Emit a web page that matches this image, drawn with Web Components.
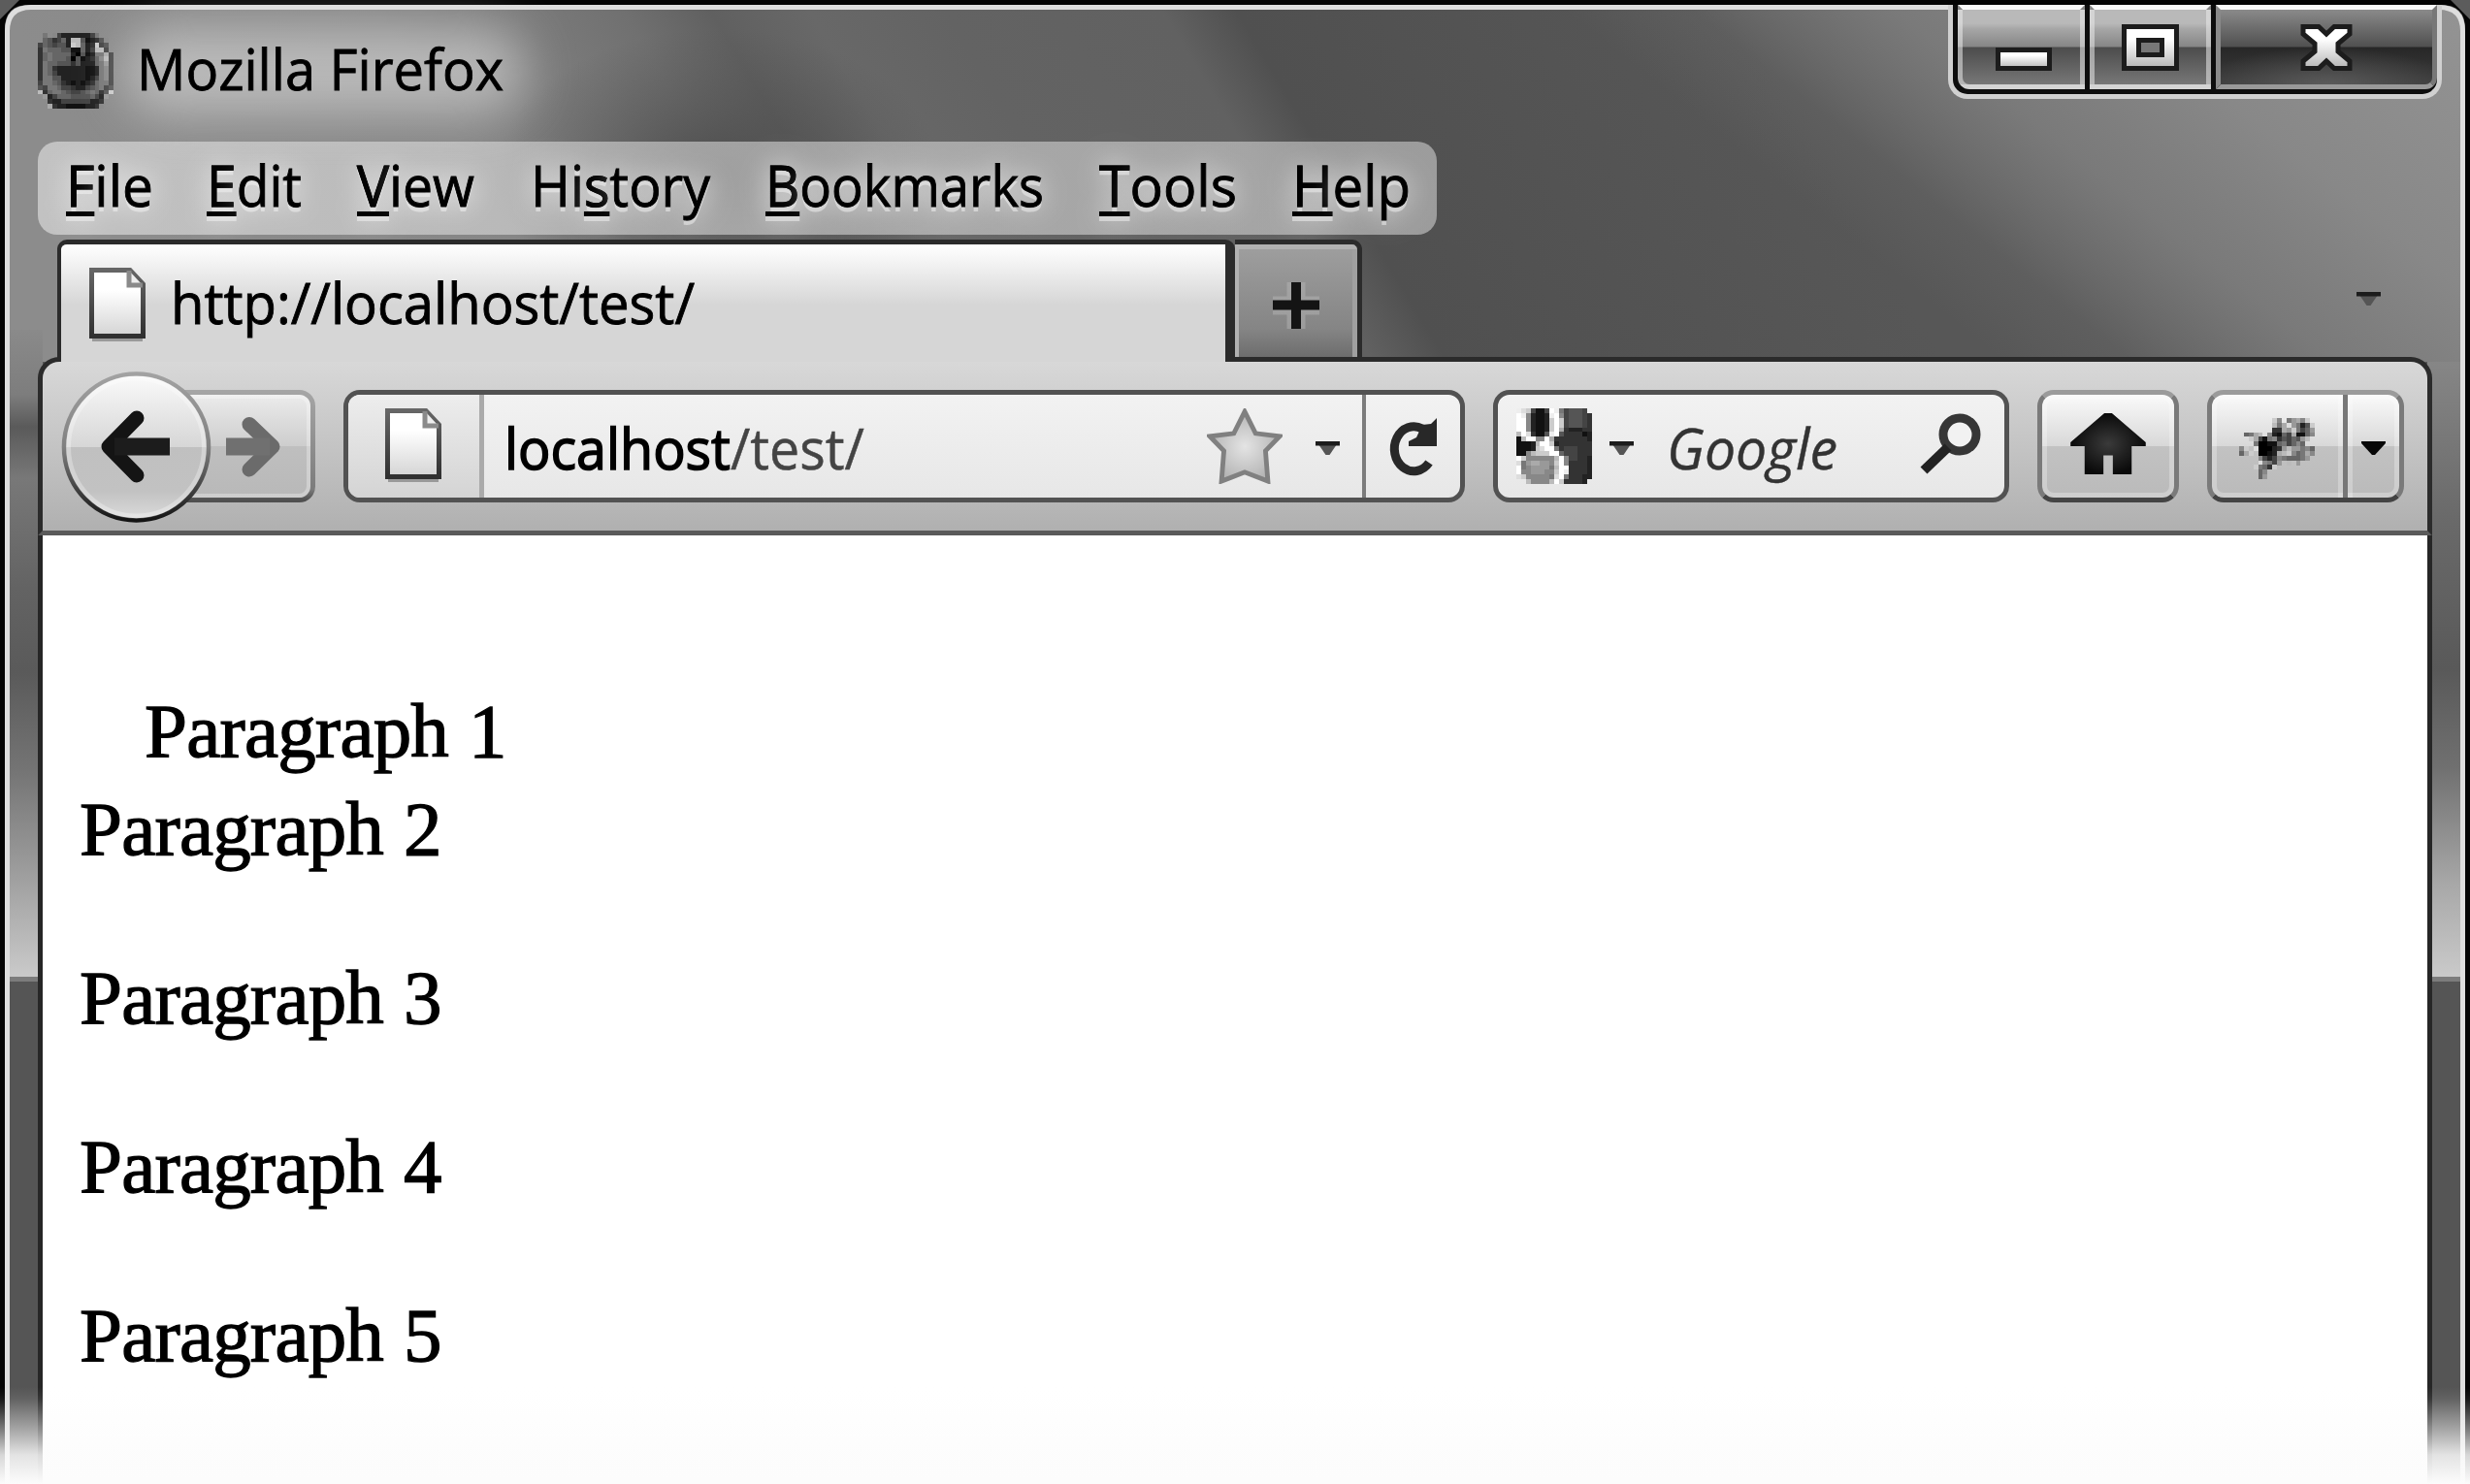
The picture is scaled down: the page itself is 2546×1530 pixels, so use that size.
<!DOCTYPE html>
<html lang="en">
<head>
<meta charset="utf-8">
<title>Mozilla Firefox</title>
<style>
html,body{margin:0;width:2546px;height:1530px;overflow:hidden;background:#777}
</style>
</head>
<body>
<browser-window>
  <title-bar slot="title">Mozilla Firefox</title-bar>
  <menu-bar slot="menu"></menu-bar>
  <tab-strip slot="tabs">http://localhost/test/</tab-strip>
  <nav-toolbar slot="toolbar"></nav-toolbar>
  <page-view slot="page">
    <p class="first">Paragraph 1</p>
    <p>Paragraph 2</p>
    <p>Paragraph 3</p>
    <p>Paragraph 4</p>
    <p>Paragraph 5</p>
  </page-view>
</browser-window>
<script>
const define = (name, html, setup) => customElements.define(name, class extends HTMLElement {
  constructor() { super(); this.attachShadow({ mode: 'open' }).innerHTML = html; }
  connectedCallback() { if (setup) setup.call(this, this.shadowRoot); }
});

/* Text condensed or widened to a set advance width */
define('fit-text', `<style>
:host{display:inline-block;white-space:nowrap;flex:none;font-family:"Open Sans","Noto Sans",sans-serif;color:#000;-webkit-text-stroke:.9px}
span{display:inline-block;transform-origin:0 50%;white-space:pre}
</style><span><slot></slot></span>`, function (root) {
  const w = +this.getAttribute('width');
  this.style.fontSize = (this.getAttribute('size') || 59) + 'px';
  this.style.width = 'auto';
  const s = root.querySelector('span');
  s.style.transform = 'none';
  const m = s.getBoundingClientRect().width;
  this.style.width = w + 'px';
  if (m) s.style.transform = 'scaleX(' + w / m + ')';
});

/* Grey-level bitmaps: one hex digit per cell, "." is empty */
const BITMAPS = {
  firefox: [
    ".7.8422222247...", ".653462bb512358.", "4654552cb623c45.", "376665511624bb4.",
    "36766662051277a4", "36766650512368b4", "3766555352226794", "3763222222112784",
    "3764222222112784", "3775522222124784", "4776532121236774", "5477644322456745",
    "b36776544567635c", ".92466655556429.", "..322444444223..", "..a32211112238.."],
  google: [
    "edc4114fe745554.", "fe82112ef8455543", "ff82112cfc455543", "ff82112cfc455543",
    "ff82112cfa322233", "bfd3115ef5333312", "1bff88fa33333332", "1112bffc23333333",
    "1112cdff73444333", "118bcccff6444333", "fc888888bf844332", "d79aa998cf833332",
    "f7899997bff33332", "f8899988cfe33332", "dc888887df733322", "..b8888bfc33332."],
  fly: [
    ".......c8.79a8c.", ".......b7ad9725c", ".......33a9c7469", ".67ab.82164a1168",
    "..ca4178354659b.", "...70011674686..", "8c.d000239b99786", "6ac.0012abc867a8",
    "....84248766679.", "....d8749.b.9...", "...c763c........", "....68..........",
    "....69.........."]
};
define('bitmap-icon', `<style>:host{display:block;flex:none}svg{display:block;width:100%;height:100%}</style>`, function (root) {
  const rows = BITMAPS[this.getAttribute('name')];
  let r = '';
  rows.forEach((row, y) => [...row].forEach((c, x) => {
    if (c !== '.') r += `<rect x="${x}" y="${y}" width="1.02" height="1.02" fill="#${c + c + c}"/>`;
  }));
  root.innerHTML += `<svg viewBox="0 0 16 ${rows.length}" preserveAspectRatio="none" shape-rendering="crispEdges">${r}</svg>`;
});

define('page-icon', `<style>:host{display:block;width:58px;height:76px;flex:none}svg{display:block}</style>
<svg width="58" height="76" viewBox="0 0 58 76">
<defs><linearGradient id="g" x1="0" y1="0" x2="0" y2="1"><stop offset=".3" stop-color="#fff"/><stop offset="1" stop-color="#d4d4d4"/></linearGradient>
<linearGradient id="s" x1="0" y1="0" x2="0" y2="1"><stop offset="0" stop-color="#666"/><stop offset="1" stop-color="#303030"/></linearGradient></defs>
<rect x="3" y="72" width="52" height="4" fill="#999"/>
<path d="M2.5 2.5H42L55.500 17V70.500H2.500Z" fill="url(#g)" stroke="url(#s)" stroke-width="5"/>
<path d="M41 3V18H55" fill="#eee" stroke="#8a8a8a" stroke-width="5"/></svg>`);

define('drop-arrow', `<style>:host{display:block;width:29px;height:18px;flex:none}svg{display:block}</style>
<svg width="29" height="18" viewBox="0 0 29 18"><path d="M3 0H26L16.500 14H12.500Z" fill="#555"/><path d="M2 0H27V4.500H2Z" fill="#1c1c1c"/></svg>`);

define('title-bar', `<style>
:host{display:flex;height:136px;position:relative;padding-left:29px;box-sizing:border-box}
bitmap-icon{width:78px;height:78px;margin-top:24px}
.t{position:relative;margin-left:24px;height:120px;line-height:120px}
.t::before{content:"";position:absolute;left:-14px;top:18px;width:415px;height:90px;border-radius:42px;background:rgba(225,225,225,.55);filter:blur(25px)}
fit-text{position:relative}
</style><bitmap-icon name="firefox"></bitmap-icon>
<div class="t"><fit-text width="378"><slot></slot></fit-text></div>
<window-buttons></window-buttons>`);

define('window-buttons', `<style>
:host{display:block;position:absolute;left:1998px;top:-5px;width:509px;height:97px}
.o{display:flex;height:97px;box-sizing:border-box;border:5px solid #d0d0d0;border-top:0;border-radius:0 0 20px 20px;background:#0d0d0d;padding:0 5px 5px;gap:5px}
.b{height:87px;box-sizing:border-box;border:5px solid rgba(235,235,235,.55);border-top:5px solid #fafafa;display:flex;background:linear-gradient(#b9b9b9 0 14px,#a6a6a6 20px,#868686 38px,#4c4c4c 39px,#777 100%)}
.b svg{display:block}
.b:first-child{width:131px;border-bottom-left-radius:12px}.b:nth-child(2){width:125px}
.b:last-child{flex:1;border-bottom-right-radius:12px;border-left-color:#8a8a8a;border-right-color:#777;border-bottom-color:#999;background:radial-gradient(ellipse 60% 50% at 50% 100%,rgba(110,110,110,.6),transparent),linear-gradient(#8a8a8a,#505050 38px,#272727 39px,#3d3d3d 100%)}
</style><div class="o">
<div class="b"><svg width="121" height="77"><defs><linearGradient id="w" x1="0" y1="0" x2="0" y2="1"><stop offset=".3" stop-color="#fff"/><stop offset="1" stop-color="#b5b5b5"/></linearGradient></defs><rect x="36.500" y="41.500" width="53" height="19" fill="url(#w)" stroke="#1c1c1c" stroke-width="5"/></svg></div>
<div class="b"><svg width="115" height="77"><rect x="30.500" y="17.500" width="54" height="43" fill="url(#w)" stroke="#1c1c1c" stroke-width="5"/><defs><linearGradient id="w" x1="0" y1="0" x2="0" y2="1"><stop offset=".3" stop-color="#fff"/><stop offset="1" stop-color="#b5b5b5"/></linearGradient></defs><rect x="45.500" y="31.500" width="24" height="15" fill="#777" stroke="#1c1c1c" stroke-width="5"/></svg></div>
<div class="b"><svg width="218" height="77"><defs><linearGradient id="w" x1="0" y1="0" x2="0" y2="1"><stop offset=".3" stop-color="#fff"/><stop offset="1" stop-color="#b5b5b5"/></linearGradient></defs><path d="M85 17.500H101L109 25L117 17.500H133V25L121 35V43L133 53V60.500H117L109 53L101 60.500H85V53L97 43V35L85 25Z" fill="url(#w)" stroke="#1c1c1c" stroke-width="5"/></svg></div>
</div>`);

define('menu-bar', `<style>
:host{display:flex;width:1442px;height:96px;margin-left:29px;box-sizing:border-box;padding-left:29px;border-radius:20px;background:linear-gradient(90deg,rgba(230,230,230,.6),rgba(215,215,215,.6) 45%,rgba(225,225,225,.52) 100%);line-height:89px}
fit-text{text-shadow:0 5px 0 rgba(245,245,245,.5),0 0 24px rgba(255,255,255,.75),0 0 40px rgba(255,255,255,.5)}
u{text-decoration:underline;text-decoration-thickness:5px;text-underline-offset:5px;text-decoration-skip-ink:none}
.g1{margin-left:55px}.g2{margin-left:57px}.g3{margin-left:58px}
</style>
<fit-text width="90"><u>F</u>ile</fit-text><fit-text class="g1" width="98"><u>E</u>dit</fit-text><fit-text class="g2" width="121"><u>V</u>iew</fit-text><fit-text class="g3" width="185">Hi<u>s</u>tory</fit-text><fit-text class="g2" width="287"><u>B</u>ookmarks</fit-text><fit-text class="g2" width="142"><u>T</u>ools</fit-text><fit-text class="g2" width="122"><u>H</u>elp</fit-text>`);

define('tab-strip', `<style>
:host{display:flex;position:relative;z-index:2;margin-top:5px;height:126px;padding-left:49px}
.tab{display:flex;box-sizing:border-box;width:1214px;height:126px;border:solid #2b2b2b;border-width:5px 10px 0 4px;border-radius:10px 10px 0 0;background:linear-gradient(#fff,#f2f2f2 20px,#d6d6d6 62px);line-height:119px;padding-left:29px}
page-icon{margin-top:24px}
fit-text{margin-left:26px}
.new{box-sizing:border-box;width:131px;height:121px;border:solid #2b2b2b;border-width:5px 5px 0 0;border-radius:0 10px 0 0;background:linear-gradient(#9f9f9f,#858585 75%,#6d6d6d);box-shadow:inset 4px 5px 0 #b2b2b2,inset -5px 0 0 #a0a0a0}
.new svg{display:block}
drop-arrow{margin:54px 0 0 1023px}
</style>
<div class="tab"><page-icon></page-icon><fit-text width="540"><slot></slot></fit-text></div>
<div class="new"><svg width="126" height="116"><path d="M63 39V87M39 63H87" stroke="rgba(190,190,190,.4)" stroke-width="19" fill="none"/><path d="M63 39V87M39 62.500H87" stroke="#141414" stroke-width="10" fill="none"/></svg></div>
<drop-arrow></drop-arrow>`);

define('nav-toolbar', `<style>
:host{display:flex;gap:29px;position:relative;margin:-5px 29px 0;height:184px;box-sizing:border-box;border:5px solid #2b2b2b;border-bottom-color:#5a5a5a;border-radius:22px 22px 0 0;background:linear-gradient(#d8d8d8,#b0b0b0);padding:29px 24px 0 19px}
.nav{width:262px;height:116px;flex:none;overflow:visible}
.box,.btn{box-sizing:border-box;height:116px;border:5px solid #525252;border-radius:17px;background:linear-gradient(#f2f2f2,#e7e7e7);display:flex;flex:none;overflow:hidden}
.url{width:1156px;line-height:108px}
.id{width:135px;flex:none;box-sizing:content-box;border-right:5px solid #aaa;background:linear-gradient(#ededed,#d4d4d4);height:106px}
.id page-icon{margin:14px 0 0 38px}
.url fit-text{margin-left:21px}
.star{margin:14px 0 0 353px;flex:none}
.url drop-arrow{margin:48px 0 0 32px}
.rel{flex:none;margin-left:21px;border-left:4px solid #7c7c7c;width:97px;height:106px}
.search{width:532px;line-height:108px}
.search bitmap-icon{width:78px;height:78px;margin:14px 0 0 19px}
.search drop-arrow{margin:48px 0 0 16px}
.search fit-text{margin-left:32px;color:#333;font-style:italic;-webkit-text-stroke:.4px}
.search svg{display:block;margin-left:80px;flex:none}
.btn{border-color:#9b9b9b #7a7a7a #444;background:linear-gradient(#fafafa,#d8d8d8 50%,#c2c2c2 50%,#bababa);box-shadow:inset 0 0 0 5px rgba(255,255,255,.28)}
.home{width:146px}.home svg{margin:19px 0 0 29px}
.fly{width:203px}.fly bitmap-icon{width:78px;height:63px;margin:24px 0 0 28px}
.fly i{width:5px;height:106px;background:#777;margin-left:29px;box-shadow:-5px 0 0 rgba(255,255,255,.28),5px 0 0 rgba(255,255,255,.28)}
.fly svg{margin:48px 0 0 14px}
</style>
<svg class="nav" viewBox="0 0 262 116"><defs>
<linearGradient id="b" x1="0" y1="0" x2="0" y2="1"><stop offset="0" stop-color="#fbfbfb"/><stop offset=".5" stop-color="#d6d6d6"/><stop offset=".5" stop-color="#c0c0c0"/><stop offset=".8" stop-color="#c2c2c2"/><stop offset="1" stop-color="#dcdcdc"/></linearGradient>
<linearGradient id="r" x1="0" y1="0" x2="0" y2="1"><stop offset="0" stop-color="#a2a2a2"/><stop offset=".5" stop-color="#808080"/><stop offset="1" stop-color="#141414"/></linearGradient>
<linearGradient id="f" x1="0" y1="0" x2="0" y2="1"><stop offset="0" stop-color="#ededed"/><stop offset=".5" stop-color="#cdcdcd"/><stop offset=".5" stop-color="#bfbfbf"/><stop offset="1" stop-color="#b8b8b8"/></linearGradient>
<linearGradient id="q" x1="0" y1="0" x2="0" y2="1"><stop offset="0" stop-color="#a5a5a5"/><stop offset=".9" stop-color="#7c7c7c"/><stop offset="1" stop-color="#505050"/></linearGradient></defs>
<rect x="100.500" y="2.500" width="159" height="111" rx="14" fill="url(#f)" stroke="url(#q)" stroke-width="5"/>
<rect x="100" y="7" width="155" height="102" rx="10" fill="none" stroke="#fff" stroke-opacity=".3" stroke-width="4"/>
<ellipse cx="77.500" cy="59" rx="74.500" ry="75.500" fill="url(#b)" stroke="url(#r)" stroke-width="4.600"/>
<ellipse cx="77.500" cy="59" rx="70" ry="71" fill="none" stroke="#fff" stroke-opacity=".3" stroke-width="5"/>
<path d="M78 29L49 58.500L78 88" fill="none" stroke="#141414" stroke-width="15" stroke-linejoin="round" stroke-linecap="round"/><path d="M112 58.500H55" stroke="#1c1c1c" stroke-width="18"/>
<path d="M194 35.500L218 58.500L194 82" fill="none" stroke="#6b6b6b" stroke-width="15" stroke-linejoin="round" stroke-linecap="round"/><path d="M170 58.500H215" stroke="#707070" stroke-width="18"/></svg>
<div class="box url"><div class="id"><page-icon></page-icon></div>
<fit-text width="371"><b style="font-weight:400;-webkit-text-stroke:1.600px #000">localhost</b><span style="color:#444;-webkit-text-stroke:.5px #444">/test/</span></fit-text>
<svg class="star" width="78" height="78" viewBox="0 0 16 16"><defs><radialGradient id="sg"><stop offset="0" stop-color="#e4e4e4"/><stop offset="1" stop-color="#b5b5b5"/></radialGradient></defs><path d="M8 .7L10.300 5.300L15.400 5.900L12.400 9L12.900 15.400L8 13.500L3.100 15.400L3.600 9L.6 5.900L5.700 5.300Z" fill="url(#sg)" stroke="#808080" stroke-width="1"/></svg>
<drop-arrow></drop-arrow>
<div class="rel"><svg width="93" height="106" viewBox="0 0 93 106"><path d="M65 70A20 23 0 1 1 58 35" fill="none" stroke="#282828" stroke-width="9"/><path d="M73 24V53H44V48L52 44L58 31L67 30Z" fill="#282828"/></svg></div></div>
<div class="box search"><bitmap-icon name="google"></bitmap-icon><drop-arrow></drop-arrow><fit-text width="176">Google</fit-text>
<svg width="72" height="106" viewBox="0 0 72 106"><circle cx="46" cy="41" r="17" fill="#f2f2f2" stroke="#363636" stroke-width="9"/><path d="M34 54L9 78" stroke="#222" stroke-width="10"/></svg></div>
<div class="btn home"><svg width="78" height="63" viewBox="0 0 16 13"><defs><radialGradient id="k2"><stop offset="0" stop-color="#3a3a3a"/><stop offset="1" stop-color="#0a0a0a"/></radialGradient></defs><path d="M7.200 0H8.800L16 6.200V7H13V13H9V9H7V13H3V7H0V6.200Z" fill="url(#k2)"/></svg></div>
<div class="btn fly"><bitmap-icon name="fly"></bitmap-icon><i></i><svg width="25" height="15"><path d="M0 0H25V2L14 14H11L0 2Z" fill="#080808"/></svg></div>`);

define('page-view', `<style>
:host{display:block;flex:1;margin:0 29px;background:#fff;border:solid #262626;border-width:0 5px;padding:156px 0 0 38px;box-sizing:border-box;font-family:"Liberation Serif","Times New Roman",serif;font-size:79px;line-height:92px;color:#000}
::slotted(p){margin:82px 0 0;height:92px;width:max-content;-webkit-text-stroke:1.300px #000;letter-spacing:-.8px;word-spacing:2px}
::slotted(p.first){margin:0 0 -73px 67px}
</style><slot></slot>`);

define('window-frame', `<style>:host{display:block;position:absolute;inset:0}svg{display:block}</style>
<svg width="2546" height="1530" viewBox="0 0 2546 1530">
<defs>
<linearGradient id="a" gradientUnits="userSpaceOnUse" x1="0" y1="0" x2="2546" y2="0" gradientTransform="matrix(1 0 .6 1 0 0)">
<stop offset="0" stop-color="#8c8c8c"/><stop offset=".15" stop-color="#868686"/><stop offset=".22" stop-color="#787878"/><stop offset=".25" stop-color="#707070"/><stop offset=".285" stop-color="#606060"/><stop offset=".325" stop-color="#686868"/><stop offset=".38" stop-color="#636363"/><stop offset=".468" stop-color="#616161"/><stop offset=".498" stop-color="#505050"/><stop offset=".7" stop-color="#575757"/><stop offset="1" stop-color="#575757"/></linearGradient>
<linearGradient id="c" gradientUnits="userSpaceOnUse" x1="1600" y1="0" x2="2546" y2="0" gradientTransform="matrix(1 0 1.250 1 0 0)">
<stop offset="0" stop-color="#888" stop-opacity="0"/><stop offset=".14" stop-color="#888" stop-opacity=".15"/><stop offset=".36" stop-color="#808080" stop-opacity=".85"/><stop offset=".6" stop-color="#888"/><stop offset="1" stop-color="#949494"/></linearGradient>
<radialGradient id="d"><stop offset="0" stop-color="#484848" stop-opacity=".9"/><stop offset="1" stop-color="#505050" stop-opacity="0"/></radialGradient>
<linearGradient id="l" x1="0" y1="0" x2="0" y2="1"><stop offset="0" stop-color="#8a8a8a"/><stop offset=".1" stop-color="#7d7d7d"/><stop offset=".15" stop-color="#5a5a5a"/><stop offset=".23" stop-color="#787878"/><stop offset=".4" stop-color="#636363"/><stop offset=".53" stop-color="#5a5a5a"/><stop offset=".68" stop-color="#747474"/><stop offset=".85" stop-color="#a0a0a0"/><stop offset="1" stop-color="#cacaca"/></linearGradient>
<linearGradient id="e" x1="0" y1="0" x2="0" y2="1"><stop offset="0" stop-color="#868686"/><stop offset=".25" stop-color="#6a6a6a"/><stop offset=".5" stop-color="#595959"/><stop offset=".66" stop-color="#707070"/><stop offset=".85" stop-color="#a8a8a8"/><stop offset="1" stop-color="#cacaca"/></linearGradient>
</defs>
<rect width="2546" height="1530" fill="#555"/>
<rect width="2546" height="373" fill="url(#a)"/><rect width="2546" height="373" fill="url(#c)"/>
<ellipse cx="740" cy="180" rx="230" ry="150" fill="url(#d)"/>
<rect x="0" y="340" width="44" height="667" fill="url(#l)"/><rect x="2502" y="373" width="44" height="634" fill="url(#e)"/>
<rect x="0" y="1007" width="2546" height="5" fill="#7c7c7c"/>
<path d="M0 0H2546V1530H0Z M5 1530H2541V30Q2541 5 2516 5H30Q5 5 5 30Z" fill="#040404" fill-rule="evenodd"/>
<path d="M7.500 1530V32Q7.500 7.500 32 7.500H2514Q2538.500 7.500 2538.500 32V1530" fill="none" stroke="#dedede" stroke-width="5"/>
<path d="M0 0H20L0 20Z M2546 0H2526L2546 20Z" fill="#5c5c5c"/>
</svg>`);

define('browser-window', `<style>
:host{display:block;position:relative;width:2546px;height:1530px;overflow:hidden}
.col{position:relative;display:flex;flex-direction:column;height:1530px;box-sizing:border-box;padding:10px 10px 0}
.fade{position:absolute;left:0;right:0;bottom:0;height:100px;background:linear-gradient(rgba(252,252,252,0),rgba(252,252,252,.08) 12%,rgba(252,252,252,.5) 45%,rgba(252,252,252,.85) 70%,#fcfcfc)}
</style>
<window-frame></window-frame>
<div class="col"><slot name="title"></slot><slot name="menu"></slot><slot name="tabs"></slot><slot name="toolbar"></slot><slot name="page"></slot></div>
<div class="fade"></div>`);

/* Widths are measured once every element has its styles */
const refit = r => r.querySelectorAll('*').forEach(e => {
  if (e.localName === 'fit-text') e.connectedCallback();
  if (e.shadowRoot) refit(e.shadowRoot);
});
refit(document);
</script>
</body>
</html>
